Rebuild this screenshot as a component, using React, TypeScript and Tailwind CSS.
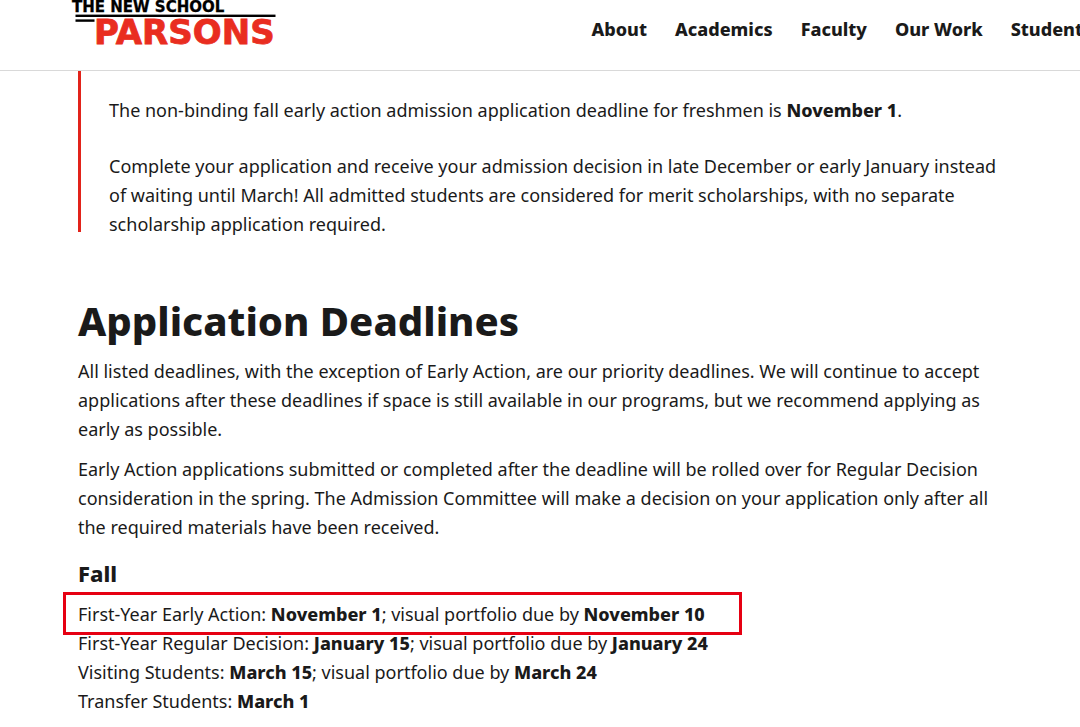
const navItems = ["About", "Academics", "Faculty", "Our Work", "Student"];

function Logo() {
  return (
    <a href="#home" aria-label="The New School Parsons" className="shrink-0">
      <svg width="206" height="48" viewBox="0 0 206 48" className="block overflow-visible">
        <g fontFamily="DejaVu Sans, sans-serif" fontWeight="700">
          <text x="0" y="12" fontSize="15" fill="#000000" stroke="#000000" strokeWidth="0.3">
            THE NEW SCHOOL
          </text>
          <text x="22" y="44" fontSize="34" fill="#e92d20" stroke="#e92d20" strokeWidth="0.8">
            PARSONS
          </text>
        </g>
        <rect x="3.5" y="14.6" width="200" height="2.4" fill="#000000" />
        <rect x="3.5" y="19.4" width="19" height="2.4" fill="#000000" />
      </svg>
    </a>
  );
}

export default function App() {
  return (
    <div className="overflow-x-hidden bg-white font-['Noto_Sans',sans-serif] text-lg leading-[29px] text-[#1a1a1a]">
      <header className="flex h-[71px] items-start justify-between overflow-hidden border-b border-[#d9d9d9] pl-[72px]">
        <Logo />
        <nav className="-mr-[3px] flex shrink-0 gap-7 pt-[15px] font-extrabold whitespace-nowrap">
          {navItems.map((item) => (
            <a key={item} href="#nav">{item}</a>
          ))}
        </nav>
      </header>
      <main className="pr-16 pl-[78px] [&_strong]:font-extrabold">
        <section className="flow-root border-l-[3px] border-[#e2231a] pt-[25px] pl-7">
          <p>
            The non-binding fall early action admission application deadline for freshmen is <strong>November 1</strong>.
          </p>
          <p className="-mb-[7px] pt-[27px]">
            Complete your application and receive your admission decision in late December or early January instead
            <br />
            of waiting until March! All admitted students are considered for merit scholarships, with no separate
            <br />
            scholarship application required.
          </p>
        </section>
        <h1 className="pt-[63px] text-[40px] leading-[52px] font-extrabold">Application Deadlines</h1>
        <p className="pt-[10px]">
          All listed deadlines, with the exception of Early Action, are our priority deadlines. We will continue to accept
          <br />
          applications after these deadlines if space is still available in our programs, but we recommend applying as
          <br />
          early as possible.
        </p>
        <p className="pt-[11px]">
          Early Action applications submitted or completed after the deadline will be rolled over for Regular Decision
          <br />
          consideration in the spring. The Admission Committee will make a decision on your application only after all
          <br />
          the required materials have been received.
        </p>
        <h2 className="pt-[15px] pb-[11px] text-[22px] leading-8 font-extrabold">Fall</h2>
        <ul className="flex flex-col items-start">
          <li className="relative">
            First-Year Early Action: <strong>November 1</strong>; visual portfolio due by <strong>November 10</strong>
            <span className="absolute -top-2 -right-[37px] -bottom-1.5 -left-[15px] border-3 border-[#e60012]" />
          </li>
          <li>
            First-Year Regular Decision: <strong>January 15</strong>; visual portfolio due by <strong>January 24</strong>
          </li>
          <li>
            Visiting Students: <strong>March 15</strong>; visual portfolio due by <strong>March 24</strong>
          </li>
          <li>
            Transfer Students: <strong>March 1</strong>
          </li>
        </ul>
      </main>
    </div>
  );
}
